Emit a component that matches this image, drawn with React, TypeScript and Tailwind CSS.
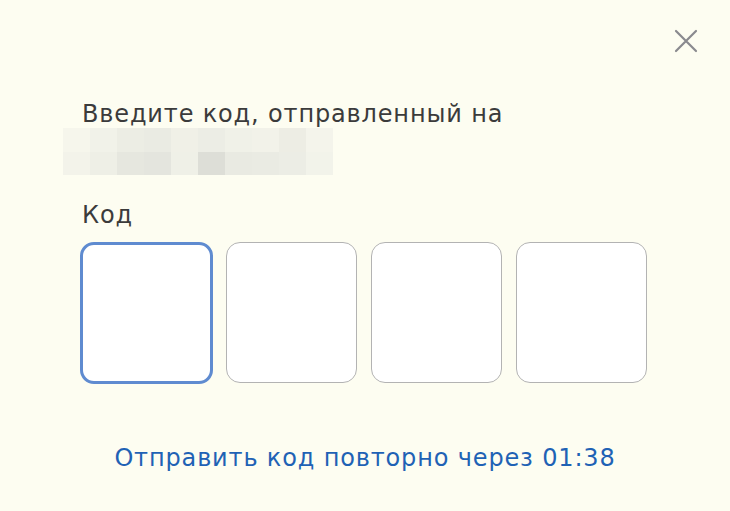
import React from "react";

const blur = [
  ["#f6f6ec", "#f1f2e9", "#ecede4", "#eaebe3", "#f0f0e7", "#ecede5", "#f0f1e8", "#f2f2e9", "#ededE4", "#f4f4eb"],
  ["#f3f3ea", "#eeefe6", "#e6e7df", "#e4e5de", "#eff0e7", "#dddeD7", "#e9eae2", "#eaebe3", "#eceDe5", "#f2f3ea"],
];

const App: React.FC = () => {
  return (
    <div
      className="w-[730px] h-[511px] bg-[#fdfdf1] relative overflow-hidden text-[#3b3b3b] tracking-[0.85px]"
      style={{ fontFamily: '"DejaVu Sans", "Noto Sans", sans-serif' }}
    >
      <button type="button" className="absolute right-[32px] top-[29px] text-[#8a8a8e]" aria-label="close">
        <svg width="24" height="24" viewBox="0 0 24 24" fill="none" stroke="currentColor" strokeWidth="2.2" strokeLinecap="round">
          <path d="M2 2L22 22M22 2L2 22" />
        </svg>
      </button>

      <div className="pt-[98px] pl-[82px]">
        <div className="text-[24px] leading-[32px]">Введите код, отправленный на</div>
        <div className="ml-[-19px] mt-[-2px] w-[270px] h-[47px] grid grid-cols-10 grid-rows-2">
          {blur.flat().map((c, i) => (
            <div key={i} style={{ background: c }} />
          ))}
        </div>
        <div className="mt-[24px] text-[24px] leading-[32px]">Код</div>
        <div className="mt-[11px] flex gap-[13px] ml-[-2px]">
          <div className="w-[133px] h-[142px] rounded-[14px] bg-white border-[3px] border-[#5f8bd0]" />
          <div className="w-[131px] h-[141px] rounded-[14px] bg-white border border-[#b3b3b3]" />
          <div className="w-[131px] h-[141px] rounded-[14px] bg-white border border-[#b3b3b3] ml-[1px]" />
          <div className="w-[131px] h-[141px] rounded-[14px] bg-white border border-[#b3b3b3] ml-[1px]" />
        </div>
      </div>

      <div className="mt-[58px] text-center text-[24px] leading-[32px] text-[#1f62b5]">
        Отправить код повторно через 01:38
      </div>
    </div>
  );
};

export default App;
